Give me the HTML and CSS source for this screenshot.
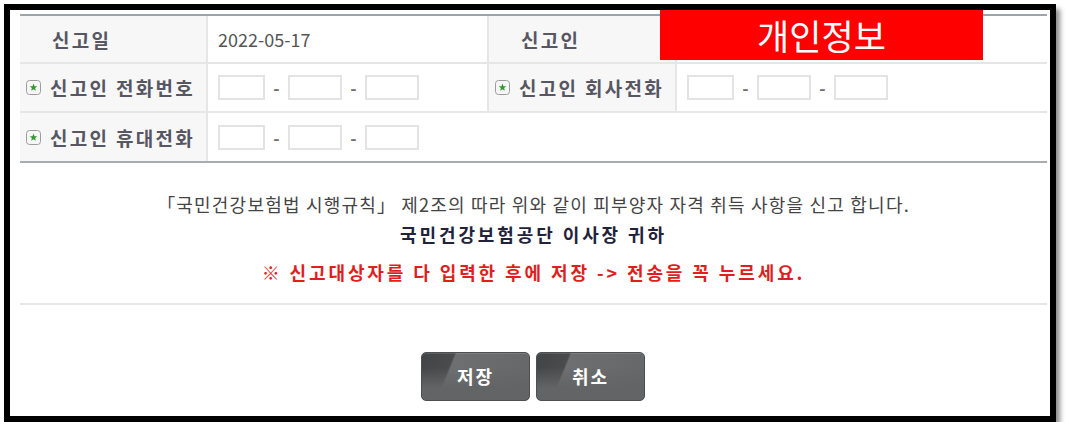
FILE: index.html
```html
<!DOCTYPE html>
<html>
<head>
    <title>피부양자 자격취득 신고</title>
    <meta name="viewport" content="width=device-width, initial-scale=1">
    <link rel="stylesheet" href="styles.css">
</head>
<body>
    <div class="frame">
        <div class="privacy-tag">개인정보</div>

        <div class="report-grid">
            <div class="cell label plain">신고일</div>
            <div class="cell value">2022-05-17</div>
            <div class="cell label plain">신고인</div>
            <div class="cell value last"></div>

            <div class="cell label">
                <svg class="req" width="15" height="15" viewBox="0 0 15 15"><rect x="0.5" y="0.5" width="14" height="14" rx="3" fill="#f6f6f6" stroke="#9c9c9c"/><path d="M7.5 3.5 L8.5 6.13 L11.3 6.26 L9.12 8.03 L9.85 10.74 L7.5 9.2 L5.15 10.74 L5.88 8.03 L3.7 6.26 L6.5 6.13Z" fill="#2f9a2f"/></svg>
                신고인 전화번호
            </div>
            <div class="cell value">
                <input class="tel short" type="text"><span class="dash">-</span><input class="tel" type="text"><span class="dash">-</span><input class="tel" type="text">
            </div>
            <div class="cell label">
                <svg class="req" width="15" height="15" viewBox="0 0 15 15"><rect x="0.5" y="0.5" width="14" height="14" rx="3" fill="#f6f6f6" stroke="#9c9c9c"/><path d="M7.5 3.5 L8.5 6.13 L11.3 6.26 L9.12 8.03 L9.85 10.74 L7.5 9.2 L5.15 10.74 L5.88 8.03 L3.7 6.26 L6.5 6.13Z" fill="#2f9a2f"/></svg>
                신고인 회사전화
            </div>
            <div class="cell value last">
                <input class="tel short" type="text"><span class="dash">-</span><input class="tel" type="text"><span class="dash">-</span><input class="tel" type="text">
            </div>

            <div class="cell label bottom">
                <svg class="req" width="15" height="15" viewBox="0 0 15 15"><rect x="0.5" y="0.5" width="14" height="14" rx="3" fill="#f6f6f6" stroke="#9c9c9c"/><path d="M7.5 3.5 L8.5 6.13 L11.3 6.26 L9.12 8.03 L9.85 10.74 L7.5 9.2 L5.15 10.74 L5.88 8.03 L3.7 6.26 L6.5 6.13Z" fill="#2f9a2f"/></svg>
                신고인 휴대전화
            </div>
            <div class="cell value wide bottom">
                <input class="tel short" type="text"><span class="dash">-</span><input class="tel" type="text"><span class="dash">-</span><input class="tel" type="text">
            </div>
        </div>

        <div class="notice">
            <p class="law">「국민건강보험법 시행규칙」 제2조의 따라 위와 같이 피부양자 자격 취득 사항을 신고 합니다.</p>
            <p class="addressee">국민건강보험공단 이사장 귀하</p>
            <p class="warning">※ 신고대상자를 다 입력한 후에 저장 -&gt; 전송을 꼭 누르세요.</p>
        </div>

        <div class="actions">
            <a class="button" href="#">저장</a>
            <a class="button" href="#">취소</a>
        </div>
    </div>
</body>
</html>
```

FILE: styles.css
```css
body {
    font-family: "Noto Sans CJK KR", "Noto Sans", sans-serif;
    margin: 0;
    background-color: #fff;
    color: #555;
}
.frame {
    position: relative;
    box-sizing: border-box;
    width: 1052px;
    height: 418px;
    margin: 4px 0 0 4px;
    padding: 4px 3px 0 10px;
    border: 6px solid #000;
    background-color: #fff;
    box-shadow: 4px 5px 5px rgba(0,0,0,0.45);
}
.privacy-tag {
    position: absolute;
    left: 650px;
    top: 0;
    width: 323px;
    height: 50px;
    background-color: #ff0000;
    color: #fff;
    font-size: 35px;
    line-height: 50px;
    text-align: center;
    z-index: 2;
}
.report-grid {
    display: grid;
    grid-template-columns: 188px 281px 188px 1fr;
    grid-template-rows: 48px 49px 48px;
    border-top: 2px solid #9ca4a9;
    border-bottom: 2px solid #a6acb0;
}
.cell {
    box-sizing: border-box;
    display: flex;
    align-items: center;
    border-bottom: 2px solid #e6e6e6;
    border-right: 2px solid #e6e6e6;
}
.cell.last,
.cell.wide {
    border-right: none;
}
.cell.wide {
    grid-column: span 3;
}
.cell.bottom {
    border-bottom: none;
}
.label {
    padding-left: 6px;
    background-color: #f7f7f7;
    color: #575763;
    font-size: 19px;
    font-weight: bold;
    letter-spacing: 2.3px;
    white-space: nowrap;
}
.label.plain {
    padding-left: 32px;
}
.req {
    margin-right: 9px;
    flex-shrink: 0;
}
.value {
    padding-left: 10px;
    font-size: 18px;
    color: #555;
}
.tel {
    box-sizing: border-box;
    width: 54px;
    height: 25px;
    margin: 0;
    padding: 0;
    border: 2px solid #e3e3e3;
    background-color: #fff;
}
.tel.short {
    width: 47px;
}
.dash {
    width: 23px;
    text-align: center;
    color: #6f6f6f;
    font-size: 17px;
    font-weight: bold;
}
.notice {
    padding: 26px 0 16px;
    border-bottom: 2px solid #e6e6e6;
    text-align: center;
}
.notice p {
    margin: 0;
    line-height: 30px;
    font-size: 18px;
}
.law {
    color: #444;
    letter-spacing: 1.2px;
}
.addressee {
    color: #22223a;
    font-weight: bold;
    letter-spacing: 2.9px;
}
.notice .warning {
    margin-top: 8px;
    color: #e01e1e;
    font-weight: bold;
    letter-spacing: 2.9px;
}
.actions {
    display: flex;
    justify-content: center;
    gap: 6px;
    padding-top: 47px;
    padding-right: 1px;
}
.button {
    box-sizing: border-box;
    width: 109px;
    height: 49px;
    border: 1px solid #4e4f50;
    border-radius: 5px;
    background:
        linear-gradient(to bottom, rgba(99,100,102,0) 30%, rgba(99,100,102,1) 75%),
        linear-gradient(112deg, #434445 0, #4a4b4c 26%, #6e6f71 27.5%, #656668 100%);
    box-shadow: inset 0 1px 0 rgba(255,255,255,0.12);
    color: #fff;
    font-size: 18px;
    font-weight: bold;
    letter-spacing: 2px;
    line-height: 47px;
    text-align: center;
    text-decoration: none;
}
```
